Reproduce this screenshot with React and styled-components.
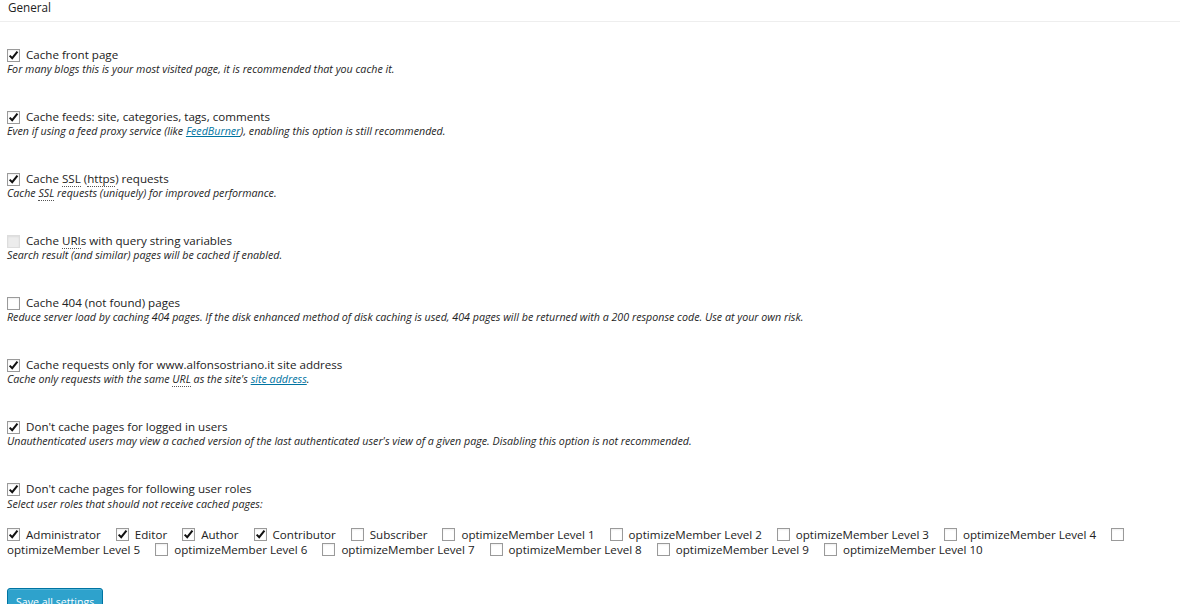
import React from "react";
import styled, { createGlobalStyle } from "styled-components";

const GlobalStyle = createGlobalStyle`
  html, body {
    margin: 0;
    padding: 0;
    background: #fff;
  }
  body {
    font-family: "Open Sans", "Liberation Sans", sans-serif;
    color: #333;
    overflow: hidden;
  }
`;

const Page = styled.div`
  width: 1180px;
  height: 604px;
  overflow: hidden;
  background: #fff;
`;

const Header = styled.h3`
  margin: 0;
  height: 21px;
  padding: 0 0 0 8px;
  font-size: 11.7px;
  line-height: 15px;
  font-weight: 400;
  color: #222;
  border-bottom: 1px solid #eee;
`;

const Body = styled.div`
  padding: 25px 7px 0 7px;
`;

const Option = styled.div`
  height: 62px;
`;

const OptionLabel = styled.label`
  display: flex;
  align-items: center;
  gap: 6px;
  height: 16px;
  font-size: 11.6px;
  line-height: 16px;
  color: #222;
`;

const Description = styled.div`
  font-size: 10.7px;
  line-height: 13px;
  font-style: italic;
  color: #1e1e1e;
  margin-top: ${(p) => p.$offset || 0}px;

  a {
    color: #0074a2;
    text-decoration: underline;
  }
`;

const Abbr = styled.abbr`
  text-decoration: none;
  border-bottom: 1px dotted #555;
`;

const Box = styled.span`
  flex: 0 0 auto;
  display: inline-flex;
  align-items: center;
  justify-content: center;
  box-sizing: border-box;
  width: 13px;
  height: 13px;
  border: 1px solid ${(p) => (p.$disabled ? "#ddd" : "#9a9a9a")};
  background: ${(p) => (p.$disabled ? "#ececec" : "#fff")};
  box-shadow: inset 0 1px 2px rgba(0, 0, 0, 0.07);
`;

const Roles = styled.div`
  display: flex;
  flex-wrap: wrap;
  align-items: center;
  margin-top: 16px;
  font-size: 11.6px;
  line-height: 15px;
  color: #222;
`;

const RoleBox = styled.span`
  display: inline-flex;
  height: 15px;
  align-items: center;
  margin-right: 6px;
`;

const RoleText = styled.span`
  margin-right: 15px;
  white-space: nowrap;
`;

const Button = styled.button`
  display: block;
  margin-top: 31px;
  height: 28px;
  padding: 0 8px;
  font-family: "Open Sans", "Liberation Sans", sans-serif;
  font-size: 10.6px;
  color: #fff;
  background: #2ea2cc;
  border: 1px solid #0074a2;
  border-radius: 3px;
  box-shadow: inset 0 1px 0 rgba(120, 200, 230, 0.5);
  line-height: 26px;
`;

const Check = ({ checked, disabled }) => (
  <Box $disabled={disabled}>
    {checked && (
      <svg width="11" height="11" viewBox="0 0 12 12">
        <path
          d="M1.8 6.1 L4.6 9 L10.3 1.8"
          fill="none"
          stroke="#111"
          strokeWidth="2.2"
          strokeLinejoin="miter"
        />
      </svg>
    )}
  </Box>
);

const options = [
  {
    checked: true,
    label: "Cache front page",
    desc: "For many blogs this is your most visited page, it is recommended that you cache it.",
  },
  {
    checked: true,
    label: "Cache feeds: site, categories, tags, comments",
    desc: (
      <>
        Even if using a feed proxy service (like <a href="#">FeedBurner</a>),
        enabling this option is still recommended.
      </>
    ),
  },
  {
    checked: true,
    label: (
      <span>
        Cache <Abbr>SSL</Abbr> (<Abbr>https</Abbr>) requests
      </span>
    ),
    desc: (
      <>
        Cache <Abbr>SSL</Abbr> requests (uniquely) for improved performance.
      </>
    ),
  },
  {
    disabled: true,
    label: (
      <span>
        Cache <Abbr>URI</Abbr>s with query string variables
      </span>
    ),
    desc: "Search result (and similar) pages will be cached if enabled.",
  },
  {
    label: "Cache 404 (not found) pages",
    desc: "Reduce server load by caching 404 pages. If the disk enhanced method of disk caching is used, 404 pages will be returned with a 200 response code. Use at your own risk.",
  },
  {
    checked: true,
    label: "Cache requests only for www.alfonsostriano.it site address",
    desc: (
      <>
        Cache only requests with the same <Abbr>URL</Abbr> as the site's{" "}
        <a href="#">site address</a>.
      </>
    ),
  },
  {
    checked: true,
    label: "Don't cache pages for logged in users",
    desc: "Unauthenticated users may view a cached version of the last authenticated user's view of a given page. Disabling this option is not recommended.",
  },
];

const roles = [
  ["Administrator", true],
  ["Editor", true],
  ["Author", true],
  ["Contributor", true],
  ["Subscriber", false],
  ...Array.from({ length: 10 }, (_, i) => [`optimizeMember Level ${i + 1}`, false]),
];

const App = () => (
  <Page>
    <GlobalStyle />
    <Header>General</Header>
    <Body>
      {options.map((o, i) => (
        <Option key={i}>
          <OptionLabel>
            <Check checked={o.checked} disabled={o.disabled} />
            {o.label}
          </OptionLabel>
          <Description>{o.desc}</Description>
        </Option>
      ))}
      <OptionLabel>
        <Check checked />
        Don't cache pages for following user roles
      </OptionLabel>
      <Description $offset={1}>
        Select user roles that should not receive cached pages:
      </Description>
      <Roles>
        {roles.map(([name, checked]) => (
          <React.Fragment key={name}>
            <RoleBox>
              <Check checked={checked} />
            </RoleBox>
            <RoleText>{name}</RoleText>
          </React.Fragment>
        ))}
      </Roles>
      <Button>Save all settings</Button>
    </Body>
  </Page>
);

export default App;
